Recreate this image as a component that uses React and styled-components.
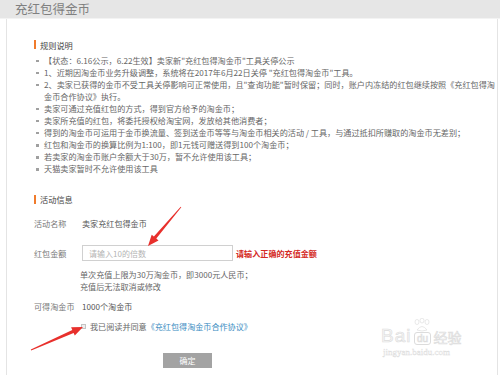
import React from "react";
import styled, { createGlobalStyle } from "styled-components";

const rules = [
  "【状态：6.16公示，6.22生效】卖家新\"充红包得淘金币\"工具关停公示",
  "1、近期因淘金币业务升级调整，系统将在2017年6月22日关停 \"充红包得淘金币\"工具。",
  "2、卖家已获得的金币不受工具关停影响可正常使用，且\"查询功能\"暂时保留；同时，账户内冻结的红包继续按照《充红包得淘金币合作协议》执行。",
  "卖家可通过充值红包的方式，得到官方给予的淘金币；",
  "卖家所充值的红包，将委托授权给淘宝网，发放给其他消费者；",
  "得到的淘金币可运用于金币换流量、签到送金币等等与淘金币相关的活动 / 工具，与通过抵扣所赚取的淘金币无差别；",
  "红包和淘金币的换算比例为1:100，即1元钱可赠送得到100个淘金币；",
  "若卖家的淘金币账户余额大于30万，暂不允许使用该工具；",
  "天猫卖家暂时不允许使用该工具",
];

// build an arrow polygon from tail to tip
const arrowPoints = (tx, ty, px, py) => {
  const dx = px - tx;
  const dy = py - ty;
  const len = Math.sqrt(dx * dx + dy * dy);
  const ux = dx / len;
  const uy = dy / len;
  const nx = -uy;
  const ny = ux;
  const head = 11;
  const bx = px - ux * head;
  const by = py - uy * head;
  const pts = [
    [tx + nx * 0.4, ty + ny * 0.4],
    [bx + nx * 1.6, by + ny * 1.6],
    [bx + nx * 4.5, by + ny * 4.5],
    [px, py],
    [bx - nx * 4.5, by - ny * 4.5],
    [bx - nx * 1.6, by - ny * 1.6],
    [tx - nx * 0.4, ty - ny * 0.4],
  ];
  return pts.map((p) => p.map((v) => v.toFixed(1)).join(",")).join(" ");
};

const App = () => {
  return (
    <Page>
      <GlobalStyle />
      <TitleBar>充红包得金币</TitleBar>
      <Panel>
        <SectionTitle>规则说明</SectionTitle>
        <RuleList>
          {rules.map((r, i) => (
            <RuleItem key={i}>
              <Bullet />
              <RuleText>{r}</RuleText>
            </RuleItem>
          ))}
        </RuleList>

        <SectionTitle $top={18}>活动信息</SectionTitle>

        <FormRow $top={10.5}>
          <Label>活动名称</Label>
          <Value>卖家充红包得金币</Value>
        </FormRow>

        <FormRow $top={13.5}>
          <Label>红包金额</Label>
          <AmountInput placeholder="请输入10的倍数" />
          <ErrorText>请输入正确的充值金额</ErrorText>
        </FormRow>

        <HelpText>
          <div>单次充值上限为30万淘金币，即3000元人民币；</div>
          <div>充值后无法取消或修改</div>
        </HelpText>

        <FormRow $top={5.5}>
          <Label>可得淘金币</Label>
          <Value>1000个淘金币</Value>
        </FormRow>

        <CheckRow>
          <CheckBox />
          <span>我已阅读并同意</span>
          <AgreeLink>《充红包得淘金币合作协议》</AgreeLink>
        </CheckRow>

        <SubmitButton>确定</SubmitButton>
      </Panel>

      <Watermark>
        <WmTop>
          <WmBig>Bai</WmBig>
          <WmDu>
            <svg width="18" height="14" viewBox="0 0 18 14">
              <g fill="none" stroke="#e2e2e2" strokeWidth="0.8">
                <ellipse cx="4" cy="4" rx="2" ry="2.5" />
                <ellipse cx="9" cy="2.6" rx="2" ry="2.4" />
                <ellipse cx="14" cy="4" rx="2" ry="2.5" />
                <path d="M4 12 Q9 5 14 12 Q9 14 4 12 Z" />
              </g>
            </svg>
            <WmDuText>du</WmDuText>
          </WmDu>
          <WmCn>经验</WmCn>
        </WmTop>
        <WmUrl>jingyan.baidu.com</WmUrl>
      </Watermark>

      <Arrows width="500" height="375">
        <polygon points={arrowPoints(181, 207, 148, 246)} fill="#e8302c" />
        <polygon points={arrowPoints(31, 350, 83, 327)} fill="#e8302c" />
      </Arrows>
    </Page>
  );
};

const GlobalStyle = createGlobalStyle`
  body {
    margin: 0;
    background: #fff;
    font-family: "Noto Sans CJK SC", "Liberation Sans", sans-serif;
  }
  * { box-sizing: border-box; }
`;

const Page = styled.div`
  position: relative;
  width: 500px;
  height: 375px;
  overflow: hidden;
  background: #fff;
`;

const TitleBar = styled.div`
  height: 19px;
  padding-left: 15px;
  background: #e6e6e6;
  border-bottom: 1px solid #f3f3f3;
  color: #808080;
  font-size: 12.5px;
  line-height: 18px;
`;

const Panel = styled.div`
  height: 356px;
  margin: 0 2px 0 6px;
  padding: 19.7px 0 0 27px;
  border-left: 1px solid #e4e4e4;
  border-right: 1px solid #e4e4e4;
`;

const SectionTitle = styled.div`
  display: flex;
  align-items: center;
  height: 12px;
  margin-top: ${(p) => p.$top || 0}px;
  color: #444;
  font-size: 8.2px;

  &::before {
    content: "";
    width: 2px;
    height: 9px;
    margin-right: 4px;
    background: #f07b2c;
  }
`;

const RuleList = styled.ul`
  list-style: none;
  margin: 4px 0 0;
  padding: 0;
`;

const RuleItem = styled.li`
  display: flex;
  align-items: flex-start;
  color: #666;
  font-size: 8.15px;
  line-height: 12.05px;
`;

const Bullet = styled.span`
  flex: none;
  width: 2.5px;
  height: 2.5px;
  margin: 5px 5.5px 0 2px;
  background: #a0a0a0;
`;

const RuleText = styled.span`
  flex: 1;
`;

const FormRow = styled.div`
  display: flex;
  align-items: center;
  height: 16px;
  margin-top: ${(p) => p.$top || 0}px;
  font-size: 8.1px;
`;

const Label = styled.span`
  width: 48px;
  color: #777;
`;

const Value = styled.span`
  color: #555;
`;

const AmountInput = styled.input`
  width: 151px;
  height: 16px;
  margin: 0 3px 0 0;
  padding: 0 6px;
  border: 1px solid #d0d0d0;
  font-family: inherit;
  font-size: 8px;
  outline: none;

  &::placeholder {
    color: #b4b4b4;
  }
`;

const ErrorText = styled.span`
  color: #d42a24;
  font-weight: bold;
`;

const HelpText = styled.div`
  margin-top: 8px;
  padding-left: 46px;
  color: #666;
  font-size: 8.1px;
  line-height: 12px;
`;

const CheckRow = styled.div`
  display: flex;
  align-items: center;
  height: 16px;
  margin-top: 3.5px;
  padding-left: 47px;
  color: #666;
  font-size: 8.1px;
`;

const CheckBox = styled.span`
  width: 5px;
  height: 5px;
  margin-right: 4px;
  border: 1px solid #c4c4c4;
  background: #eee;
`;

const AgreeLink = styled.span`
  color: #3a8cc2;
`;

const SubmitButton = styled.button`
  display: block;
  width: 49px;
  height: 15px;
  margin: 19px 0 0 129px;
  padding: 0;
  border: none;
  background: #a3a3a3;
  color: #fff;
  font-family: inherit;
  font-size: 8px;
`;

const Watermark = styled.div`
  position: absolute;
  left: 381px;
  top: 318px;
  width: 92px;
  color: #f6f6f6;
  -webkit-text-stroke: 0.6px #dcdcdc;
`;

const WmTop = styled.div`
  display: flex;
  align-items: flex-end;
`;

const WmBig = styled.span`
  font-family: "Liberation Sans", sans-serif;
  font-size: 19px;
  line-height: 18px;
  letter-spacing: 1px;
`;

const WmDu = styled.span`
  display: flex;
  flex-direction: column;
  align-items: center;
  margin: 0 2px;
`;

const WmDuText = styled.span`
  padding: 0 2px;
  border: 0.6px solid #dcdcdc;
  border-radius: 3px;
  font-family: "Liberation Sans", sans-serif;
  font-size: 10px;
  line-height: 11px;
`;

const WmCn = styled.span`
  font-size: 14px;
  line-height: 16px;
`;

const WmUrl = styled.div`
  margin-top: 2px;
  padding-left: 2px;
  font-family: "Liberation Serif", serif;
  font-size: 9px;
  line-height: 10px;
  -webkit-text-stroke: 0.3px #d8d8d8;
`;

const Arrows = styled.svg`
  position: absolute;
  left: 0;
  top: 0;
  pointer-events: none;
`;

export default App;
